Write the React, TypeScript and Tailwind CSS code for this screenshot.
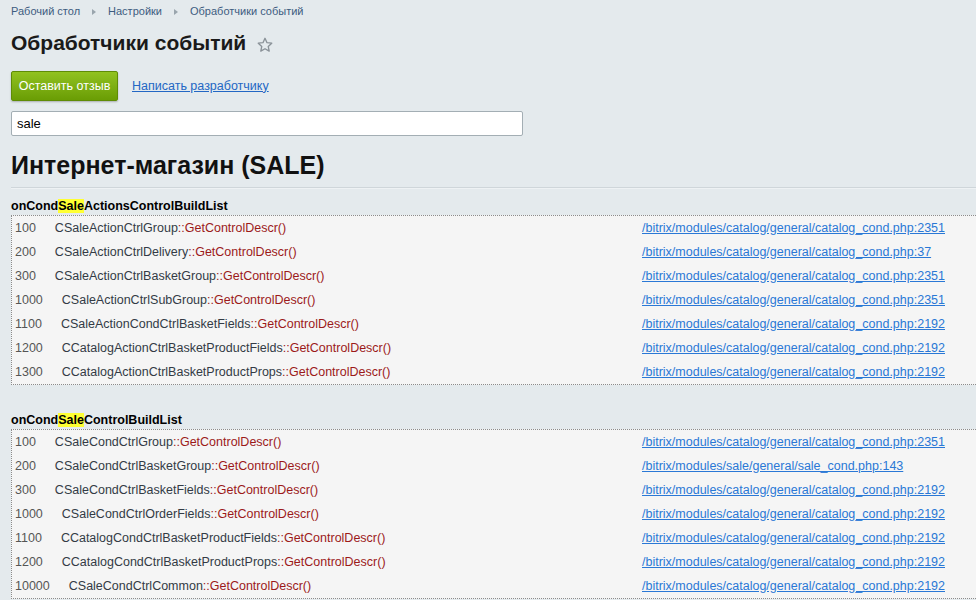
import React from 'react';

type Row = { sort: string; cls: string; file: string };

const sections: { prefix: string; rest: string; rows: Row[] }[] = [
  {
    prefix: 'onCond',
    rest: 'ActionsControlBuildList',
    rows: [
      { sort: '100', cls: 'CSaleActionCtrlGroup', file: '/bitrix/modules/catalog/general/catalog_cond.php:2351' },
      { sort: '200', cls: 'CSaleActionCtrlDelivery', file: '/bitrix/modules/catalog/general/catalog_cond.php:37' },
      { sort: '300', cls: 'CSaleActionCtrlBasketGroup', file: '/bitrix/modules/catalog/general/catalog_cond.php:2351' },
      { sort: '1000', cls: 'CSaleActionCtrlSubGroup', file: '/bitrix/modules/catalog/general/catalog_cond.php:2351' },
      { sort: '1100', cls: 'CSaleActionCondCtrlBasketFields', file: '/bitrix/modules/catalog/general/catalog_cond.php:2192' },
      { sort: '1200', cls: 'CCatalogActionCtrlBasketProductFields', file: '/bitrix/modules/catalog/general/catalog_cond.php:2192' },
      { sort: '1300', cls: 'CCatalogActionCtrlBasketProductProps', file: '/bitrix/modules/catalog/general/catalog_cond.php:2192' },
    ],
  },
  {
    prefix: 'onCond',
    rest: 'ControlBuildList',
    rows: [
      { sort: '100', cls: 'CSaleCondCtrlGroup', file: '/bitrix/modules/catalog/general/catalog_cond.php:2351' },
      { sort: '200', cls: 'CSaleCondCtrlBasketGroup', file: '/bitrix/modules/sale/general/sale_cond.php:143' },
      { sort: '300', cls: 'CSaleCondCtrlBasketFields', file: '/bitrix/modules/catalog/general/catalog_cond.php:2192' },
      { sort: '1000', cls: 'CSaleCondCtrlOrderFields', file: '/bitrix/modules/catalog/general/catalog_cond.php:2192' },
      { sort: '1100', cls: 'CCatalogCondCtrlBasketProductFields', file: '/bitrix/modules/catalog/general/catalog_cond.php:2192' },
      { sort: '1200', cls: 'CCatalogCondCtrlBasketProductProps', file: '/bitrix/modules/catalog/general/catalog_cond.php:2192' },
      { sort: '10000', cls: 'CSaleCondCtrlCommon', file: '/bitrix/modules/catalog/general/catalog_cond.php:2192' },
    ],
  },
];

const Arrow = () => (
  <span className="mx-[12px] inline-block w-0 h-0 border-y-[3.5px] border-y-transparent border-l-[4px] border-l-[#9aa5ad] align-middle" />
);

const App = () => {
  return (
    <div className="min-h-screen bg-[#e4eaed] font-['Liberation_Sans',Arial,sans-serif] overflow-hidden">
      <div className="pl-[11px]">
        {/* хлебные крошки */}
        <div className="pt-[3px] h-[20px] text-[11px] text-[#3d5c80] flex items-center">
          <span>Рабочий стол</span>
          <Arrow />
          <span>Настройки</span>
          <Arrow />
          <span>Обработчики событий</span>
        </div>

        <div className="mt-[10px] flex items-center h-[26px]">
          <h2 className="text-[21px] font-bold text-[#1a1a1a]">Обработчики событий</h2>
          <svg width="18" height="18" viewBox="0 0 24 24" className="ml-[10px] mt-[3px]" fill="none" stroke="#8a9298" strokeWidth="1.8" strokeLinejoin="round">
            <path d="M12 3l2.7 5.9 6.3.7-4.7 4.3 1.3 6.3L12 17l-5.6 3.2 1.3-6.3L3 9.6l6.3-.7z" />
          </svg>
        </div>

        <div className="mt-[15px] flex items-center">
          <button className="h-[30px] w-[107px] rounded-[2px] border border-[#5f8c06] bg-gradient-to-b from-[#91c21f] to-[#6a9d04] text-white text-[12.5px] shadow-[0_1px_2px_rgba(0,0,0,0.25)]">
            Оставить отзыв
          </button>
          <a className="ml-[14px] text-[12.5px] text-[#2367c4] underline">Написать разработчику</a>
        </div>

        <div className="mt-[10px] w-[512px] h-[25px] bg-white border border-[#a3aeb4] rounded-[2px] flex items-center pl-[5px] text-[13px] text-black">
          sale
        </div>

        <h1 className="mt-[12px] text-[25px] leading-[34px] font-bold text-[#111]">Интернет-магазин (SALE)</h1>
      </div>
      <div className="mt-[5px] ml-[11px] h-[2px] bg-[#cfd6da] border-b border-[#eef2f4]" />

      <div className="pl-[11px]">
        {sections.map((s, i) => (
          <div key={i} className={i === 0 ? 'mt-[10px]' : 'mt-[28px]'}>
            <div className="text-[12.5px] font-bold leading-[15px] text-black">
              {s.prefix}
              <span className="bg-[#ffff33]">Sale</span>
              {s.rest}
            </div>
            <div className="mt-[1px] bg-[#f5f5f5] border-l border-t border-b border-dotted border-[#8c8c8c]">
              {s.rows.map((r, j) => (
                <div key={j} className="h-[24px] flex items-center text-[12.5px]">
                  <div className="w-[630px] flex pl-[3px]">
                    <span className="text-[#555]">{r.sort}</span>
                    <span className="ml-[19px] text-[#333b45]">{r.cls}</span>
                    <span className="text-[#9c1a1a]">::GetControlDescr()</span>
                  </div>
                  <a className="text-[#2a78d6] underline whitespace-nowrap">{r.file}</a>
                </div>
              ))}
            </div>
          </div>
        ))}
      </div>
    </div>
  );
};

export default App;
